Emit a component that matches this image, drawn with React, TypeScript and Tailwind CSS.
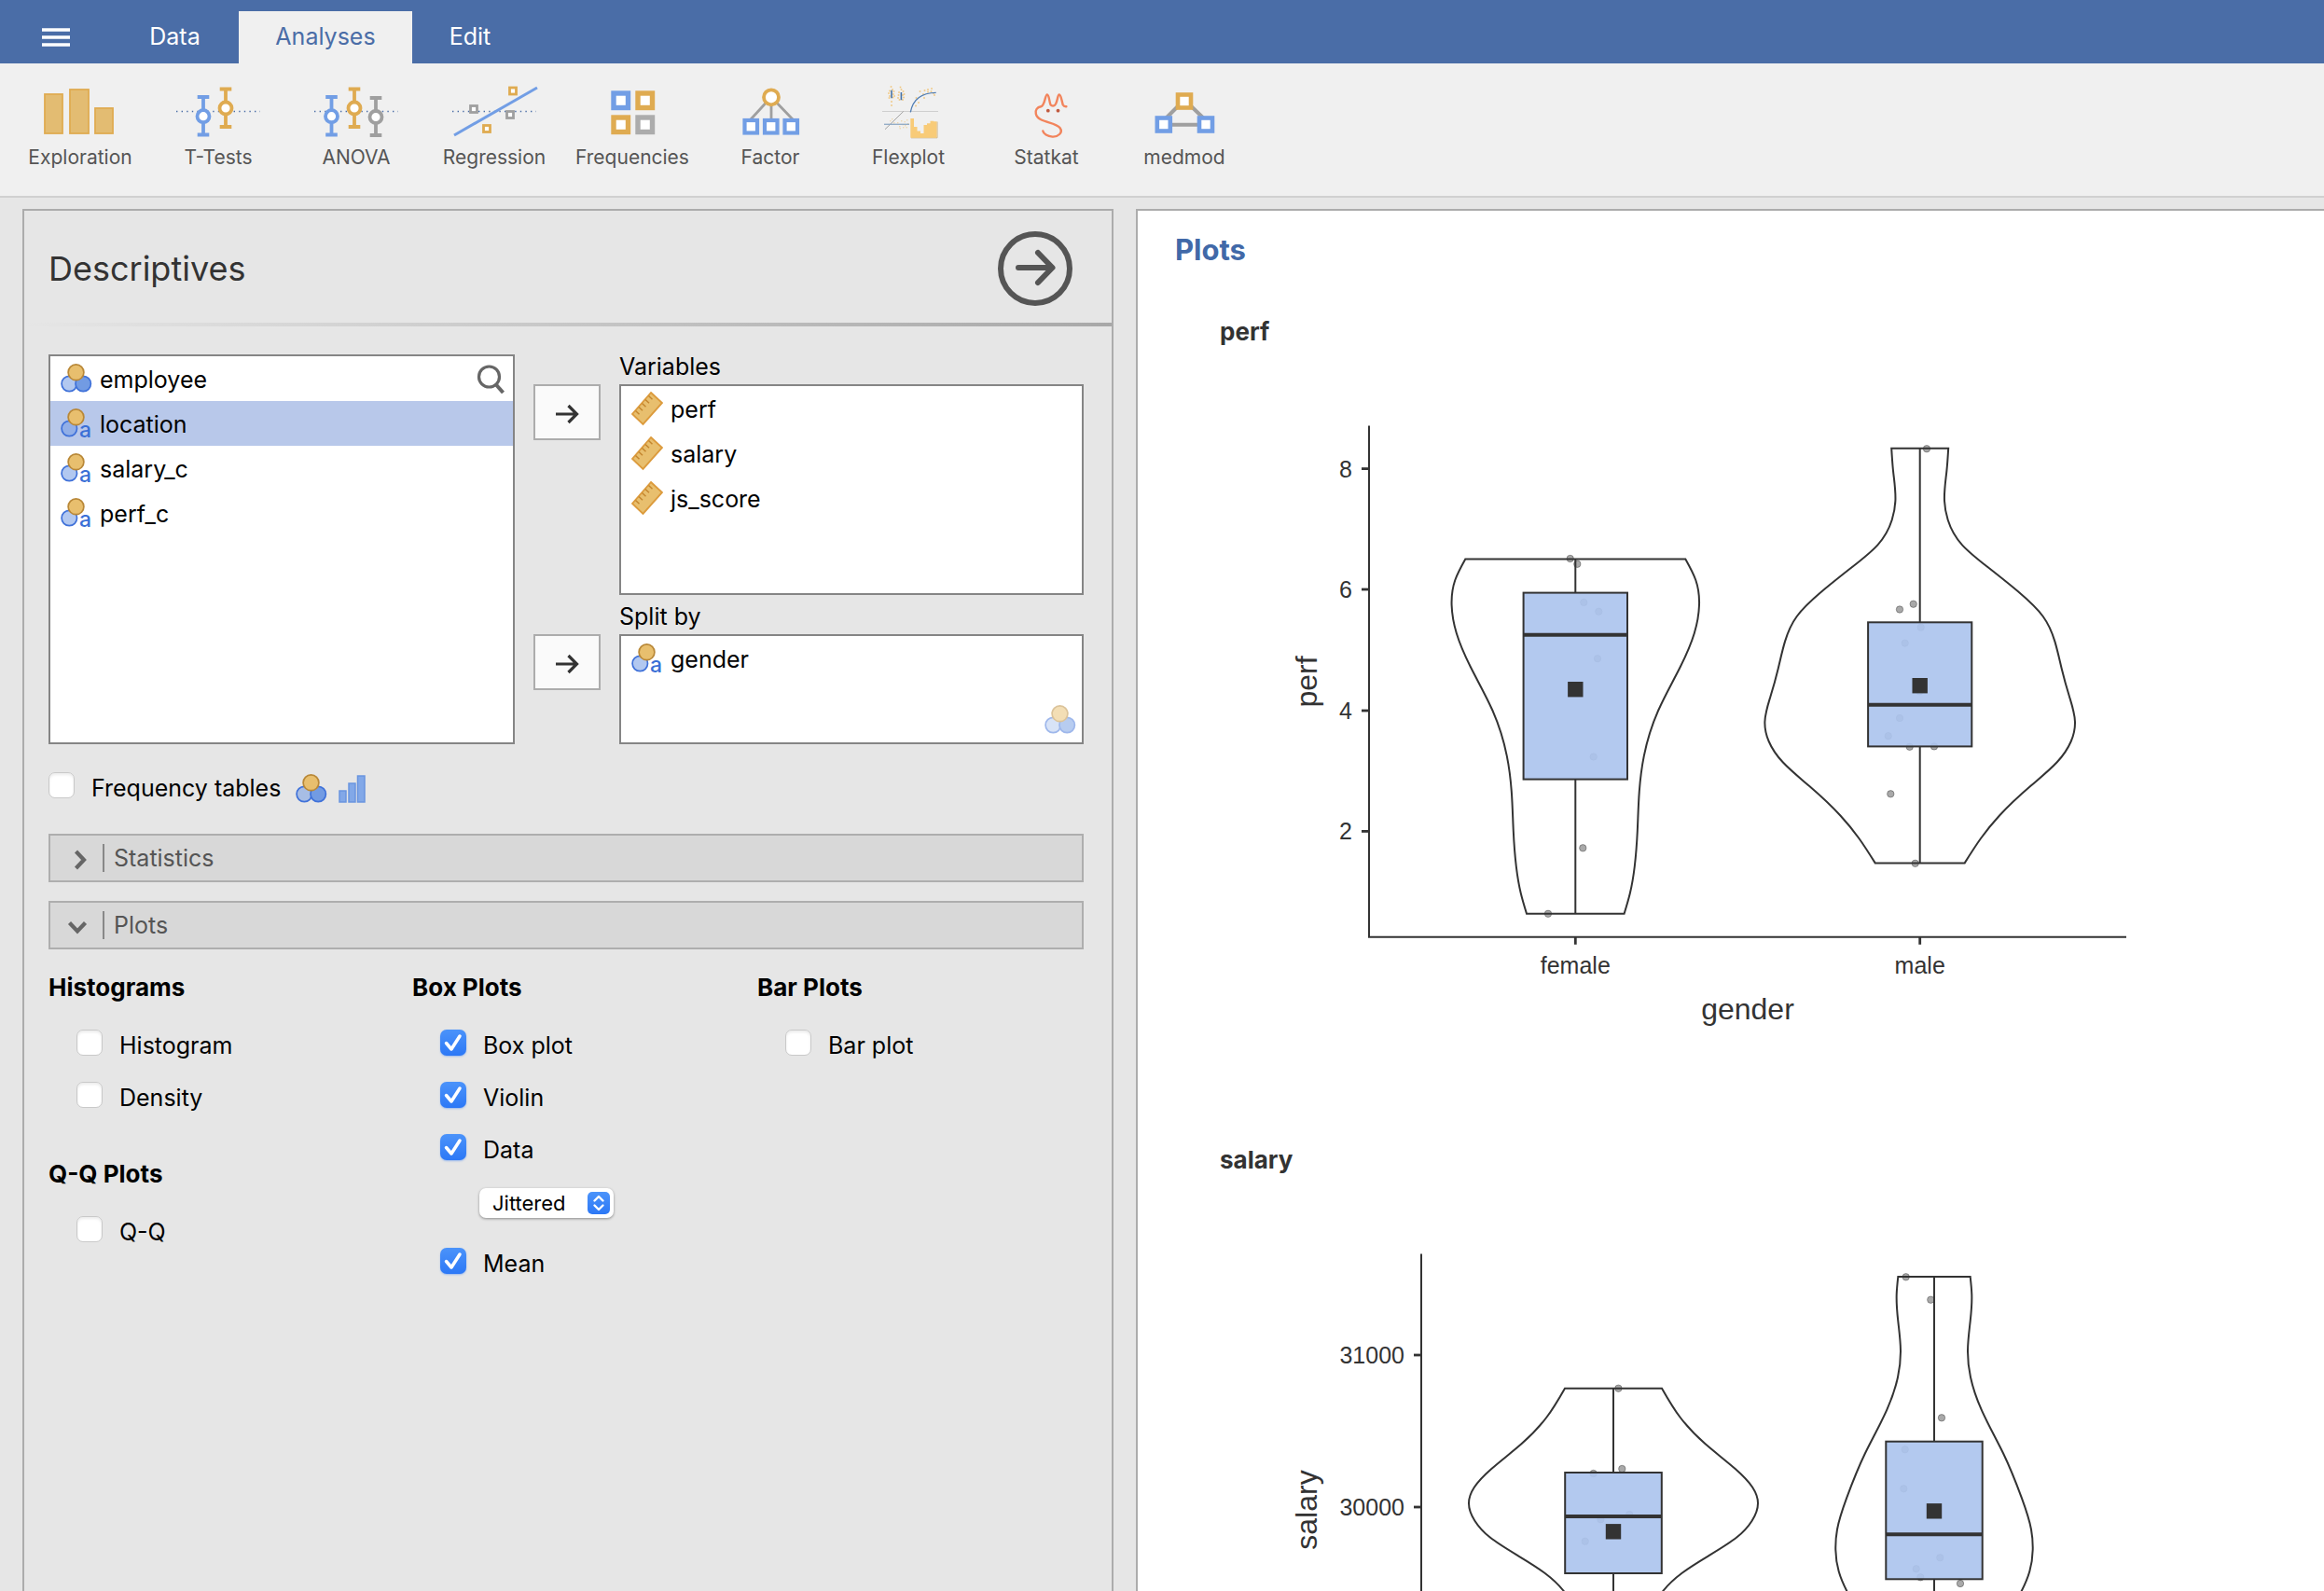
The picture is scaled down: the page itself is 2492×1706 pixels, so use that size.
import React, { useState } from "react";
import type { ReactNode } from "react";

const BLUE = "#729ee5";
const GOLD = "#dfab51";
const GREY = "#9f9f9f";
const INK = "#333333";

/* ---------- toolbar icons ---------- */

function ToolIcon({ children }: { children: ReactNode }) {
  return (
    <svg viewBox="0 0 96 60" className="h-15 w-24" fill="none" aria-hidden="true">
      {children}
    </svg>
  );
}

function DottedLine() {
  return <line x1="3" y1="29.5" x2="93" y2="29.5" stroke="#4a6da7" strokeWidth="1.4" strokeDasharray="1.4 4.2" />;
}

function ErrorBar({ x, top, mid, bottom, color }: { x: number; top: number; mid: number; bottom: number; color: string }) {
  return (
    <g stroke={color} strokeWidth="3.8">
      <path d={`M${x} ${top}V${bottom}M${x - 6.3} ${top}h12.6M${x - 6.3} ${bottom}h12.6`} />
      <circle cx={x} cy={mid} r="6.5" fill="#fff" />
    </g>
  );
}

function Square({ x, y, size, stroke, color }: { x: number; y: number; size: number; stroke: number; color: string }) {
  return <rect x={x} y={y} width={size} height={size} stroke={color} strokeWidth={stroke} fill="#fff" />;
}

const violinDots = [
  [29.5, 3], [31, 6], [28, 7.5], [27, 10], [32.5, 8], [28, 13], [32, 11], [27.5, 15], [31.5, 14.5], [30, 19], [30, 23], [33, 13],
  [39.5, 3.5], [40.5, 6], [38, 9], [42.5, 8], [37.5, 12], [42, 12], [37, 15], [43, 14.5], [38.5, 17], [42, 17], [43.5, 11],
  [56, 23.5], [59, 20], [56.5, 15], [60.5, 8], [65, 15], [64, 11], [65.5, 7], [69, 8.5], [69, 6], [73, 5], [75, 10], [76, 12], [72.5, 8],
];

const residualDots = [
  [36, 41], [38, 45], [40, 39], [41.5, 43], [42, 46], [43.5, 40], [44, 44], [46, 38], [38.5, 47], [45.5, 46], [30, 37], [32, 41], [28, 39], [47, 42],
];

const tools: { label: string; icon: ReactNode }[] = [
  {
    label: "Exploration",
    icon: (
      <g fill="#e3bc72" stroke={GOLD} strokeWidth="1.8">
        <rect x="10" y="11" width="19" height="42" />
        <rect x="37" y="6" width="20" height="47" />
        <rect x="64" y="26" width="19" height="27" />
      </g>
    ),
  },
  {
    label: "T-Tests",
    icon: (
      <>
        <DottedLine />
        <ErrorBar x={32} top={14} mid={34.7} bottom={54.5} color={BLUE} />
        <ErrorBar x={56} top={5.5} mid={26} bottom={46} color={GOLD} />
      </>
    ),
  },
  {
    label: "ANOVA",
    icon: (
      <>
        <DottedLine />
        <ErrorBar x={21.5} top={14} mid={34.7} bottom={54.5} color={BLUE} />
        <ErrorBar x={46} top={5.5} mid={26} bottom={46} color={GOLD} />
        <ErrorBar x={69} top={15} mid={35.5} bottom={55} color={GREY} />
      </>
    ),
  },
  {
    label: "Regression",
    icon: (
      <>
        <DottedLine />
        <line x1="5" y1="55" x2="94" y2="4" stroke={BLUE} strokeWidth="3" />
        <Square x={64.5} y={4} size={7} stroke={2.8} color={GOLD} />
        <Square x={22.5} y={23.5} size={7} stroke={2.8} color={GREY} />
        <Square x={61.5} y={29.5} size={7} stroke={2.8} color={GREY} />
        <Square x={36.5} y={44.5} size={7} stroke={2.8} color={GOLD} />
      </>
    ),
  },
  {
    label: "Frequencies",
    icon: (
      <>
        <Square x={28} y={10} size={15.5} stroke={5.4} color={BLUE} />
        <Square x={54} y={10} size={15.5} stroke={5.4} color={GOLD} />
        <Square x={28} y={36} size={15.5} stroke={5.4} color={GOLD} />
        <Square x={54} y={36} size={15.5} stroke={5.4} color="#acacac" />
      </>
    ),
  },
  {
    label: "Factor",
    icon: (
      <>
        <path d="M49 14L27 38M49 14V38M49 14L72 38" stroke={GREY} strokeWidth="2.8" />
        <circle cx="49" cy="14.3" r="8" stroke={GOLD} strokeWidth="3.8" fill="#fff" />
        <Square x={20.5} y={39} size={13.5} stroke={4.2} color={BLUE} />
        <Square x={42} y={39} size={13.5} stroke={4.2} color={BLUE} />
        <Square x={63.5} y={39} size={13.5} stroke={4.2} color={BLUE} />
      </>
    ),
  },
  {
    label: "Flexplot",
    icon: (
      <>
        <line x1="20" y1="29.5" x2="80" y2="29.5" stroke="#cfcfcf" strokeWidth="1.2" />
        {violinDots.map(([x, y]) => (
          <rect key={`${x}-${y}`} x={x - 0.8} y={y - 0.8} width="1.6" height="1.6" fill="#f0c57a" />
        ))}
        {residualDots.map(([x, y]) => (
          <rect key={`${x}-${y}`} x={x} y={y} width="1.4" height="1.4" fill="#eed7b0" />
        ))}
        <path d="M30 6.7V15.3M40.4 9V17.3" stroke="#4673a8" strokeWidth="1.6" />
        <path d="M50.3 30.3C52 21 58 9.5 77.7 9.3" stroke="#4f7cb2" strokeWidth="1.3" />
        <line x1="23" y1="48.7" x2="42.7" y2="29.5" stroke="#999" strokeWidth="0.9" />
        <line x1="22" y1="43.3" x2="49" y2="43.3" stroke="#8fa9c4" strokeWidth="1.3" />
        <path d="M79 40.5V57.8H51" stroke="#c9b389" strokeWidth="1" />
        <path d="M50.3 57.700V37H54V46H57.500V50.500H61V53H64.500V44H68V42.300H71.500V39.700H75.200V40.300H78.500V57.700Z" fill="#f8cb78" />
      </>
    ),
  },
  {
    label: "Statkat",
    icon: (
      <>
        <path
          d="M69.4 24.2C67.5 24.4 66.5 23.8 65.8 22.5C64.5 19 64 11.5 61.8 11.5C59.6 11.5 60 22.5 56 23.4C54.5 23.7 53.5 23.5 52.6 22.5C51 19 51 11.5 48.9 11.5C46.5 11.5 46.5 23.5 42.2 24.3C38 25 36 28 36.8 32C38.5 41.5 57 40.5 62.5 47C66.5 52.5 60 57 54.5 56.6C49 56.3 45 53.5 44.3 50.5"
          stroke="#f2845c"
          strokeWidth="2.4"
          strokeLinecap="round"
        />
        <circle cx="49.8" cy="28.7" r="1.9" fill="#c25b40" />
        <circle cx="60.5" cy="28.7" r="1.9" fill="#c25b40" />
      </>
    ),
  },
  {
    label: "medmod",
    icon: (
      <>
        <path d="M48 17L24 41M48 17L73 41M26 43.700H70" stroke={GREY} strokeWidth="4" />
        <Square x={41} y={11.5} size={14} stroke={4.6} color={GOLD} />
        <Square x={18.8} y={36.5} size={14} stroke={4.6} color={BLUE} />
        <Square x={64} y={36.5} size={14} stroke={4.6} color={BLUE} />
      </>
    ),
  },
];

/* ---------- measure-type icons ---------- */

function NominalIcon({ text = false, faded = false }: { text?: boolean; faded?: boolean }) {
  return (
    <svg viewBox="0 0 34 32" className={faded ? "h-8 w-[34px] opacity-50" : "h-8 w-[34px] overflow-visible"} strokeWidth="1.7" aria-hidden="true">
      <circle cx="9.3" cy="21.5" r="8.2" fill="#729be3" fillOpacity="0.55" stroke="#3f71d9" />
      {text ? (
        <text x="20" y="31" fontSize="23" fontWeight="500" fill="#3a6fd6" fontFamily="Inter, sans-serif">
          a
        </text>
      ) : (
        <circle cx="24.2" cy="21.5" r="8.2" fill="#729be3" stroke="#3f71d9" />
      )}
      <circle cx="16.5" cy="9.3" r="8.4" fill="#e8bf6e" stroke="#b98838" />
    </svg>
  );
}

function OrdinalIcon() {
  return (
    <svg viewBox="0 0 30 30" className="size-[30px]" fill="#82a8e8" stroke="#6a95df" strokeWidth="1.5" aria-hidden="true">
      <rect x="1" y="17" width="7" height="12" />
      <rect x="11" y="9" width="7" height="20" />
      <rect x="20.5" y="1" width="7.5" height="28" />
    </svg>
  );
}

function RulerIcon() {
  return (
    <svg viewBox="0 0 34 38" className="h-[38px] w-[34px]" aria-hidden="true">
      <path d="M21 2L33 13L12.5 36L1 25Z" fill="#e8bf6e" stroke="#dc9b3d" strokeWidth="1.9" />
      <path d="M4.5 21.5l4 3.7M8 17.5l4 3.7M11.5 13.5l4 3.7M15 9.5l4 3.7M18.5 5.5l4 3.7" stroke="#c4862f" strokeWidth="1.5" />
    </svg>
  );
}

/* ---------- form pieces ---------- */

function CheckRow({ label, checked = false, extra }: { label: string; checked?: boolean; extra?: ReactNode }) {
  const [on, setOn] = useState(checked);
  return (
    <div className="flex items-start">
      <label className="flex items-start gap-[18px]">
        <span className="relative block size-7">
          <input
            type="checkbox"
            checked={on}
            onChange={(e) => setOn(e.target.checked)}
            className="peer block size-7 appearance-none rounded-[7px] border border-[#c9c9c9] bg-white shadow-[inset_0_2px_3px_rgba(0,0,0,0.08)] checked:border-0 checked:bg-linear-to-b checked:from-[#4b93fa] checked:to-[#2c78f6] checked:shadow-[0_1px_2px_rgba(44,120,246,0.4)]"
          />
          <svg viewBox="0 0 28 28" className="pointer-events-none absolute inset-0 hidden size-7 peer-checked:block" fill="none" aria-hidden="true">
            <path d="M6.5 14.5L12 21L21 7" stroke="#fff" strokeWidth="3.5" strokeLinecap="round" strokeLinejoin="round" />
          </svg>
        </span>
        <span className="leading-[34px]">{label}</span>
      </label>
      {extra}
    </div>
  );
}

function GroupTitle({ children }: { children: ReactNode }) {
  return <h3 className="mb-7 text-[26px] leading-[34px] font-bold">{children}</h3>;
}

function VariableRow({ name, icon, selected = false }: { name: string; icon: ReactNode; selected?: boolean }) {
  return (
    <li className={selected ? "flex h-12 items-center gap-2 bg-[#b8c8ea] px-[11px]" : "flex h-12 items-center gap-2 px-[11px]"}>
      {icon}
      <span className="pt-0.5 leading-8">{name}</span>
    </li>
  );
}

function MoveButton({ label }: { label: string }) {
  return (
    <button type="button" aria-label={label} className="flex h-15 items-center justify-center border-2 border-[#acacac] bg-[#fafafa] pt-1">
      <svg viewBox="0 0 26 22" className="h-[22px] w-[26px]" fill="none" stroke="#333" strokeWidth="3.2" aria-hidden="true">
        <path d="M1 11H23M14.5 2L23.5 11L14.5 20" />
      </svg>
    </button>
  );
}

function Disclosure({ title, open = false }: { title: string; open?: boolean }) {
  return (
    <button type="button" aria-expanded={open} className="flex h-13 w-full items-center border-2 border-[#aeaeae] bg-[#d8d8d8] pl-4 text-left text-[#555]">
      <svg viewBox="0 0 30 30" className="size-[30px]" fill="none" stroke="#666" strokeWidth="4.2" aria-hidden="true">
        {open ? <path d="M4.5 12.5L13 21.5L21.5 12.5" /> : <path d="M11.5 8L20 17L11.5 26" />}
      </svg>
      <span className="ml-2.5 h-[30px] border-l-2 border-[#888] pl-2.5 leading-[30px]">{title}</span>
    </button>
  );
}

/* ---------- violin / box charts ---------- */

type Pt = [number, number];

interface Group {
  name: string;
  x: number;
  outline: Pt[]; // half width, y
  boxHalf: number;
  q1: number;
  q3: number;
  median: number;
  mean: number;
  points: Pt[];
}

interface Plot {
  title: string;
  axisX: number;
  ticks: [string, number][];
  groups: Group[];
}

// Slopes dw/dy of the natural cubic spline through (y, w), by the Thomas algorithm.
function splineSlopes(pts: Pt[]): number[] {
  const n = pts.length;
  const sub: number[] = [];
  const diag: number[] = [];
  const sup: number[] = [];
  const rhs: number[] = [];
  const h = (i: number) => pts[i + 1][1] - pts[i][1];
  const s = (i: number) => (pts[i + 1][0] - pts[i][0]) / h(i);
  for (let i = 0; i < n; i++) {
    if (i === 0) {
      sub.push(0);
      diag.push(2);
      sup.push(1);
      rhs.push(3 * s(0));
    } else if (i === n - 1) {
      sub.push(1);
      diag.push(2);
      sup.push(0);
      rhs.push(3 * s(n - 2));
    } else {
      sub.push(h(i));
      diag.push(2 * (h(i) + h(i - 1)));
      sup.push(h(i - 1));
      rhs.push(3 * (h(i) * s(i - 1) + h(i - 1) * s(i)));
    }
  }
  for (let i = 1; i < n; i++) {
    const m = sub[i] / diag[i - 1];
    diag[i] -= m * sup[i - 1];
    rhs[i] -= m * rhs[i - 1];
  }
  const out = new Array<number>(n);
  out[n - 1] = rhs[n - 1] / diag[n - 1];
  for (let i = n - 2; i >= 0; i--) out[i] = (rhs[i] - sup[i] * out[i + 1]) / diag[i];
  return out;
}

function violinPath(g: Group): string {
  const m = splineSlopes(g.outline);
  const pts = g.outline;
  const last = pts.length - 1;
  let d = `M${g.x - pts[0][0]} ${pts[0][1]}`;
  for (let i = 0; i < last; i++) {
    const [w0, y0] = pts[i];
    const [w1, y1] = pts[i + 1];
    const k = (y1 - y0) / 3;
    d += `C${g.x - (w0 + m[i] * k)} ${y0 + k} ${g.x - (w1 - m[i + 1] * k)} ${y1 - k} ${g.x - w1} ${y1}`;
  }
  d += `L${g.x + pts[last][0]} ${pts[last][1]}`;
  for (let i = last; i > 0; i--) {
    const [w1, y1] = pts[i];
    const [w0, y0] = pts[i - 1];
    const k = (y1 - y0) / 3;
    d += `C${g.x + (w1 - m[i] * k)} ${y1 - k} ${g.x + (w0 + m[i - 1] * k)} ${y0 + k} ${g.x + w0} ${y0}`;
  }
  return `${d}Z`;
}

const plots: Plot[] = [
  {
    title: "perf",
    axisX: 160,
    ticks: [["8", 102.6], ["6", 232], ["4", 362], ["2", 491.4]],
    groups: [
      {
        name: "female",
        x: 381.3,
        outline: [[118, 199.5], [129, 222], [132.7, 249], [127.5, 279], [112.5, 315], [89, 361.5], [73.5, 410.6], [68.5, 448.6], [66.5, 491], [63.5, 529], [58.5, 558], [52.3, 579.8]],
        boxHalf: 55.7,
        q3: 235.6,
        q1: 435.6,
        median: 280.7,
        mean: 339.2,
        points: [[375.7, 199], [383.3, 204.8], [390.3, 245.9], [406.3, 255.7], [405, 306.2], [400.7, 411.5], [389.3, 509.3], [352, 579.8]],
      },
      {
        name: "male",
        x: 750.7,
        outline: [[30.5, 80.7], [28.7, 104.8], [26.3, 137], [30, 157.5], [45.3, 184.3], [72, 207.5], [105.3, 234.3], [132, 261], [144.7, 287.9], [152, 316.9], [160.3, 347], [166.3, 374], [162, 395], [147, 417.3], [118.7, 442.8], [85.3, 474.5], [65.3, 499], [48, 525.4]],
        boxHalf: 55.6,
        q3: 267.3,
        q1: 400.4,
        median: 355.7,
        mean: 335.2,
        points: [[758, 81.2], [743.7, 247.7], [729, 253.5], [751.7, 272.7], [734.7, 289.6], [750.3, 341.4], [729, 370], [716.7, 389.2], [739.7, 400.8], [766, 400.4], [719.3, 451.3], [745.7, 525.8]],
      },
    ],
  },
  {
    title: "salary",
    axisX: 216,
    ticks: [["31000", 165], ["30000", 328], ["29000", 491]],
    groups: [
      {
        name: "female",
        x: 422,
        outline: [[52, 200.7], [71.8, 232], [98.6, 260.3], [130.7, 287], [149.3, 307], [155, 323.7], [148.6, 342.7], [132.5, 360.3], [102, 380.3], [73.6, 398.7], [53.2, 418], [42, 436], [30, 470]],
        boxHalf: 51.8,
        q3: 291,
        q1: 399,
        median: 338,
        mean: 354.3,
        points: [[427.4, 200.7], [431.3, 287], [400.6, 292], [439.2, 336], [408.4, 341.3], [391.7, 364.7]],
      },
      {
        name: "male",
        x: 766,
        outline: [[38.7, 81], [40.3, 100], [38.7, 128.7], [36, 160.3], [39, 188.7], [50.7, 223.7], [74, 270.3], [94, 318.7], [104, 352], [105.7, 373.7], [102.3, 397], [93.7, 418], [78, 445], [55, 480]],
        boxHalf: 51.7,
        q3: 257.7,
        q1: 405.3,
        median: 357.3,
        mean: 332.3,
        points: [[735.7, 81.3], [762.3, 105.7], [774, 232.3], [734.7, 266.3], [733.3, 308.3], [772.3, 382.3], [746.7, 394.3], [751.3, 403.3], [794, 410]],
      },
    ],
  },
];

function ViolinPlot({ plot }: { plot: Plot }) {
  const right = 972;
  const bottom = 604.8;
  return (
    <svg viewBox="0 0 1040 740" className="block h-[740px] w-[1040px]" fill="none" stroke={INK} strokeWidth="2" fontFamily="'Liberation Sans', Arial, sans-serif" role="img" aria-label={`${plot.title} by gender`}>
      <path d={`M${plot.axisX} 56.5V${bottom}H${right}`} />
      {plot.ticks.map(([label, y]) => (
        <g key={label}>
          <line x1={plot.axisX - 8} x2={plot.axisX} y1={y} y2={y} strokeWidth="2.8" />
          <text x={plot.axisX - 18} y={y + 9} textAnchor="end" fontSize="25" fill={INK} stroke="none">
            {label}
          </text>
        </g>
      ))}
      {plot.groups.map((g) => {
        const top = g.outline[0][1];
        const end = g.outline[g.outline.length - 1][1];
        return (
          <g key={g.name}>
            <path d={violinPath(g)} />
            {g.points.map(([x, y]) => (
              <circle key={`${x}-${y}`} cx={x} cy={y} r="3.7" fill="#333" fillOpacity="0.42" strokeOpacity="0.42" strokeWidth="1" />
            ))}
            <path d={`M${g.x} ${top}V${g.q3}M${g.x} ${g.q1}V${end}`} />
            <rect x={g.x - g.boxHalf} y={g.q3} width={g.boxHalf * 2} height={g.q1 - g.q3} fill="#adc4ee" fillOpacity="0.92" />
            <line x1={g.x - g.boxHalf} x2={g.x + g.boxHalf} y1={g.median} y2={g.median} strokeWidth="4" />
            <rect x={g.x - 8.2} y={g.mean - 8.2} width="16.4" height="16.4" fill={INK} stroke="none" />
            <line x1={g.x} x2={g.x} y1={bottom} y2={bottom + 8} strokeWidth="2.8" />
            <text x={g.x} y="644" textAnchor="middle" fontSize="25" fill={INK} stroke="none">
              {g.name}
            </text>
          </g>
        );
      })}
      <text x="566" y="693" textAnchor="middle" fontSize="32" fill={INK} stroke="none">
        gender
      </text>
      <text transform="translate(104 331) rotate(-90)" textAnchor="middle" fontSize="32" fill={INK} stroke="none">
        {plot.title}
      </text>
    </svg>
  );
}

/* ---------- page ---------- */

export default function App() {
  return (
    <div className="flex h-screen flex-col overflow-hidden bg-[#e6e6e6] font-[Inter,sans-serif] text-[25px] text-black">
      <nav className="flex h-17 shrink-0 items-end bg-[#4a6da7] text-white">
        <button type="button" aria-label="Menu" className="flex h-14 w-[119px] items-center justify-center">
          <svg viewBox="0 0 30 20" className="h-5 w-[30px]" stroke="#fff" strokeWidth="3.4" aria-hidden="true">
            <path d="M0 2H30M0 10H30M0 18H30" />
          </svg>
        </button>
        <button type="button" className="h-14 w-[137px]">Data</button>
        <button type="button" className="h-14 w-[186px] bg-[#f0f0f0] text-[#4a6da7]">Analyses</button>
        <button type="button" className="h-14 w-[124px]">Edit</button>
      </nav>

      <div className="flex h-36 shrink-0 border-b-2 border-[#d0d0d0] bg-[#f0f0f0] pl-3">
        {tools.map((t) => (
          <button key={t.label} type="button" className="flex w-37 flex-col items-center pt-[22px] text-[21px] text-[#555]">
            <ToolIcon>{t.icon}</ToolIcon>
            <span className="mt-1 leading-[30px]">{t.label}</span>
          </button>
        ))}
      </div>

      <main className="grid min-h-0 flex-1 grid-cols-[minmax(0,1170fr)_minmax(0,1274fr)] gap-6 pt-3 pl-6">
        <section className="overflow-hidden border-2 border-b-0 border-[#acacac]">
          <header className="flex h-30 items-center justify-between pt-1 pr-[42px] pl-[26px]">
            <h1 className="text-[36px] text-[#333]">Descriptives</h1>
            <button type="button" aria-label="Close options" className="size-20">
              <svg viewBox="0 0 80 80" className="size-20" fill="none" stroke="#555" strokeLinecap="round" strokeLinejoin="round" aria-hidden="true">
                <circle cx="40" cy="40" r="37" strokeWidth="6" />
                <path d="M22 39H58M43 23L58.5 39L43 55" strokeWidth="6" />
              </svg>
            </button>
          </header>
          <div className="h-1 bg-linear-to-r from-[#e6e6e6] to-[#a8a8a8]" />

          <div className="pt-[30px] pr-[30px] pl-[26px]">
            <div className="grid grid-cols-[minmax(0,500fr)_72px_minmax(0,498fr)] grid-rows-[32px_226px_42px_118px] gap-x-5">
              <div className="relative row-span-4 border-2 border-[#858585] bg-white">
                <ul>
                  <VariableRow name="employee" icon={<NominalIcon />} />
                  <VariableRow name="location" icon={<NominalIcon text />} selected />
                  <VariableRow name="salary_c" icon={<NominalIcon text />} />
                  <VariableRow name="perf_c" icon={<NominalIcon text />} />
                </ul>
                <button type="button" aria-label="Search variables" className="absolute top-2 right-2 size-8">
                  <svg viewBox="0 0 32 32" className="size-8" fill="none" stroke="#666" aria-hidden="true">
                    <circle cx="14.5" cy="14" r="11" strokeWidth="3.2" />
                    <path d="M21.5 22L29.5 31" strokeWidth="4" />
                  </svg>
                </button>
              </div>

              <div className="col-start-3 row-start-1 flex items-end pb-[5px] leading-7">Variables</div>
              <div className="col-start-2 row-start-2 flex flex-col">
                <MoveButton label="Move to Variables" />
              </div>
              <ul className="col-start-3 row-start-2 border-2 border-[#858585] bg-white">
                <VariableRow name="perf" icon={<RulerIcon />} />
                <VariableRow name="salary" icon={<RulerIcon />} />
                <VariableRow name="js_score" icon={<RulerIcon />} />
              </ul>

              <div className="col-start-3 row-start-3 flex items-end pb-[5px] leading-7">Split by</div>
              <div className="col-start-2 row-start-4 flex flex-col">
                <MoveButton label="Move to Split by" />
              </div>
              <div className="relative col-start-3 row-start-4 border-2 border-[#858585] bg-white">
                <ul>
                  <VariableRow name="gender" icon={<NominalIcon text />} />
                </ul>
                <span className="absolute right-1.5 bottom-2">
                  <NominalIcon faded />
                </span>
              </div>
            </div>

            <div className="mt-[30px]">
              <CheckRow
                label="Frequency tables"
                extra={
                  <span className="ml-4 flex h-9 items-center gap-3">
                    <NominalIcon />
                    <OrdinalIcon />
                  </span>
                }
              />
            </div>

            <div className="mt-[30px] flex flex-col gap-5">
              <Disclosure title="Statistics" />
              <Disclosure title="Plots" open />
            </div>

            <div className="grid grid-cols-[390fr_370fr_350fr] pt-6">
              <div>
                <GroupTitle>Histograms</GroupTitle>
                <div className="flex flex-col gap-[22px] pl-[30px]">
                  <CheckRow label="Histogram" />
                  <CheckRow label="Density" />
                </div>
                <div className="mt-12">
                  <GroupTitle>Q-Q Plots</GroupTitle>
                  <div className="pl-[30px]">
                    <CheckRow label="Q-Q" />
                  </div>
                </div>
              </div>
              <div>
                <GroupTitle>Box Plots</GroupTitle>
                <div className="flex flex-col gap-[22px] pl-[30px]">
                  <CheckRow label="Box plot" checked />
                  <CheckRow label="Violin" checked />
                  <CheckRow label="Data" checked />
                </div>
                <div className="relative mt-6 mb-8 ml-[72px] h-8 w-36">
                  <select aria-label="Data display" defaultValue="Jittered" className="block h-8 w-36 appearance-none rounded-[7px] bg-white pl-3.5 text-[22px] leading-8 shadow-[0_1px_3px_rgba(0,0,0,0.4)]">
                    <option>Jittered</option>
                    <option>Stacked</option>
                  </select>
                  <svg viewBox="0 0 24 24" className="pointer-events-none absolute top-1 right-1 size-6 rounded-[5px] bg-linear-to-b from-[#4b93fa] to-[#2c78f6]" fill="none" stroke="#fff" strokeWidth="2.4" strokeLinecap="round" strokeLinejoin="round" aria-hidden="true">
                    <path d="M7.5 9.5L12 5L16.5 9.5M7.5 14.5L12 19L16.5 14.5" />
                  </svg>
                </div>
                <div className="pl-[30px]">
                  <CheckRow label="Mean" checked />
                </div>
              </div>
              <div>
                <GroupTitle>Bar Plots</GroupTitle>
                <div className="pl-[30px]">
                  <CheckRow label="Bar plot" />
                </div>
              </div>
            </div>
          </div>
        </section>

        <section className="overflow-hidden border-t-2 border-l-2 border-[#acacac] bg-white pt-[22px] pl-10 text-[#333]">
          <h2 className="text-[31px] leading-10 font-bold text-[#4169a8]">Plots</h2>
          <div className="mt-[50px] flex flex-col gap-[86px] pl-12">
            {plots.map((p) => (
              <article key={p.title}>
                <h3 className="mb-[26px] text-[26px] leading-9 font-bold">{p.title}</h3>
                <ViolinPlot plot={p} />
              </article>
            ))}
          </div>
        </section>
      </main>
    </div>
  );
}
